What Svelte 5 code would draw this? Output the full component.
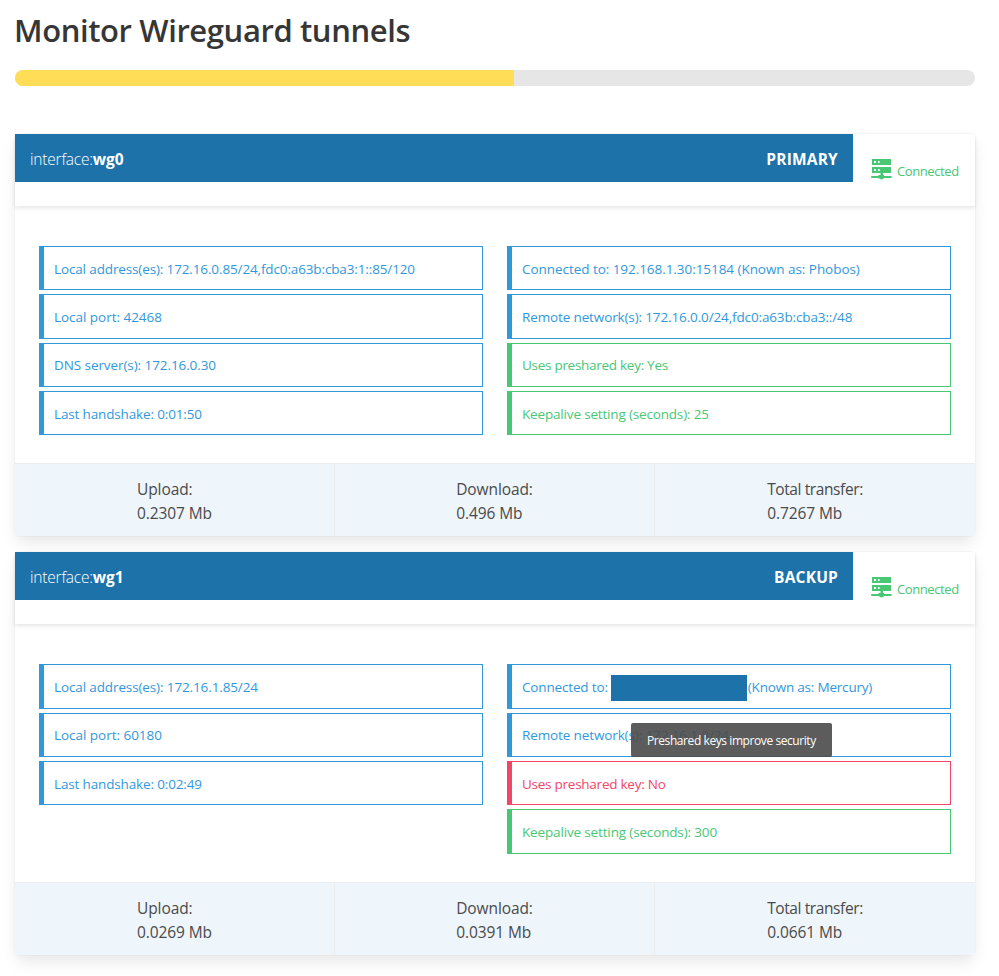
<script>
  const progress = 52;
  const tunnels = [
    {
      name: 'wg0',
      role: 'PRIMARY',
      local: [
        { text: 'Local address(es): 172.16.0.85/24,fdc0:a63b:cba3:1::85/120', track: -0.13 },
        { text: 'Local port: 42468', track: -0.03 },
        { text: 'DNS server(s): 172.16.0.30', track: -0.08 },
        { text: 'Last handshake: 0:01:50', track: -0.15 }
      ],
      remote: [
        { text: 'Connected to: 192.168.1.30:15184 (Known as: Phobos)', kind: 'info', track: -0.05 },
        { text: 'Remote network(s): 172.16.0.0/24,fdc0:a63b:cba3::/48', kind: 'info', track: -0.13 },
        { text: 'Uses preshared key: Yes', kind: 'success', track: -0.28 },
        { text: 'Keepalive setting (seconds): 25', kind: 'success', track: -0.17 }
      ],
      stats: [['Upload:', '0.2307 Mb'], ['Download:', '0.496 Mb'], ['Total transfer:', '0.7267 Mb']]
    },
    {
      name: 'wg1',
      role: 'BACKUP',
      local: [
        { text: 'Local address(es): 172.16.1.85/24', track: -0.12 },
        { text: 'Local port: 60180', track: -0.03 },
        { text: 'Last handshake: 0:02:49', track: -0.15 }
      ],
      remote: [
        { text: 'Connected to:', hidden: true, after: '(Known as: Mercury)', kind: 'info', track: -0.16 },
        { text: 'Remote network(s): 172.16.1.0/24', kind: 'info', track: -0.12 },
        { text: 'Uses preshared key: No', kind: 'danger', track: -0.25, tip: 'Preshared keys improve security' },
        { text: 'Keepalive setting (seconds): 300', kind: 'success', track: -0.15 }
      ],
      stats: [['Upload:', '0.0269 Mb'], ['Download:', '0.0391 Mb'], ['Total transfer:', '0.0661 Mb']]
    }
  ];
</script>

<main>
  <h1>Monitor Wireguard tunnels</h1>
  <div class="progress"><div class="bar" style="width: {progress}%"></div></div>

  {#each tunnels as t}
    <section class="card">
      <header>
        <div class="title">
          <span class="iface">interface:<b>{t.name}</b></span>
          <b class="role">{t.role}</b>
        </div>
        <div class="status">
          <svg width="22" height="22" viewBox="0 0 22 22" fill="currentColor">
            <path fill-rule="evenodd" d="M1 1h19v6H1zM3 3v2h2V3zM7 3v2h1.600V3z" />
            <path fill-rule="evenodd" d="M1 9h19v6H1zM3 11v2h2v-2zM7 11v2h1.600v-2z" />
            <path d="M9.500 15h2.500v2H13v1h7.600v2H13v.5h-1v.7H9v-.7H7.500V20H.2v-2h7.300v-1h2z" />
          </svg>
          <span>Connected</span>
        </div>
      </header>
      <div class="body">
        <div class="column">
          {#each t.local as line}
            <div class="item info"><span style="letter-spacing: {line.track}px">{line.text}</span></div>
          {/each}
        </div>
        <div class="column">
          {#each t.remote as line}
            <div class="item {line.kind}">
              <span style="letter-spacing: {line.track}px">{line.text}</span>
              {#if line.hidden}<i class="redacted"></i><span>{line.after}</span>{/if}
              {#if line.tip}<div class="tooltip"><span>{line.tip}</span></div>{/if}
            </div>
          {/each}
        </div>
      </div>
      <footer>
        {#each t.stats as [label, value]}
          <div class="stat">
            <p><span class:long={label.length > 10}>{label}</span><br />{value}</p>
          </div>
        {/each}
      </footer>
    </section>
  {/each}
</main>

<style>
  :global(body) {
    background: #fff;
  }
  main {
    box-sizing: border-box;
    width: 999px;
    height: 976px;
    overflow: hidden;
    padding: 12px 24px 0 15px;
    font-family: 'Open Sans', 'Noto Sans', sans-serif;
    font-size: 15.5px;
    line-height: 24px;
    color: #4a4a4a;
    white-space: nowrap;
  }
  h1 {
    margin: 0 0 22px -1px;
    font-size: 31px;
    line-height: 36px;
    font-weight: 600;
    letter-spacing: -0.4px;
    color: #363636;
  }
  .progress {
    height: 16px;
    margin-bottom: 48px;
    border-radius: 8px;
    overflow: hidden;
    background: #e6e6e6;
  }
  .bar {
    height: 100%;
    background: #ffdd57;
  }
  .card {
    margin-bottom: 16px;
    border-radius: 4px;
    background: #fff;
    box-shadow: 0 8px 16px -2px rgba(10, 10, 10, 0.1), 0 0 0 1px rgba(10, 10, 10, 0.02);
  }
  header {
    display: flex;
    align-items: flex-start;
    height: 72px;
    box-shadow: 0 2px 4px rgba(10, 10, 10, 0.1);
  }
  .title {
    display: flex;
    flex: 1;
    justify-content: space-between;
    box-sizing: border-box;
    height: 48px;
    padding: 13px 15px 11px;
    color: #fff;
    background: #1d72aa;
  }
  .iface {
    font-weight: 300;
    letter-spacing: -0.2px;
  }
  .title b {
    font-weight: 700;
  }
  .iface b {
    letter-spacing: -0.1px;
  }
  .role {
    letter-spacing: 0.2px;
  }
  .status {
    display: flex;
    width: 122px;
    padding-top: 24px;
    color: #48c774;
    font-size: 13px;
  }
  .status svg {
    margin-left: 18px;
  }
  .status span {
    margin: 1px 0 0 4px;
    letter-spacing: -0.4px;
  }
  .body {
    display: flex;
    gap: 24px;
    padding: 40.05px 24px 28px;
  }
  .column {
    display: flex;
    flex: 1;
    flex-direction: column;
    gap: 4px;
  }
  .item {
    position: relative;
    display: flex;
    align-items: center;
    box-sizing: border-box;
    height: 44.33px;
    padding: 1px 10px 0;
    border: 1px solid;
    border-left-width: 5px;
    font-size: 13.5px;
    letter-spacing: -0.2px;
  }
  .info {
    color: #3298dc;
  }
  .success {
    color: #48c774;
  }
  .danger {
    color: #f14668;
  }
  .redacted {
    width: 136px;
    height: 26px;
    margin: 1px 1px 0 3px;
    background: #1d72aa;
  }
  .tooltip {
    position: absolute;
    left: 119px;
    top: -39px;
    box-sizing: border-box;
    width: 201px;
    height: 34px;
    padding: 6px 16px 0;
    border-radius: 2px;
    color: #fff;
    background: rgba(74, 74, 74, 0.9);
    font-size: 12px;
    letter-spacing: -0.42px;
    line-height: 24px;
  }
  footer {
    display: grid;
    grid-template-columns: repeat(3, 1fr);
    box-sizing: border-box;
    height: 73px;
    border-top: 1px solid #ededed;
    border-radius: 0 0 4px 4px;
    background: #eef5fb;
  }
  .stat {
    display: flex;
    justify-content: center;
    padding-top: 13px;
    border-right: 1px solid #ededed;
  }
  .stat:last-child {
    border-right: 0;
  }
  .stat p {
    margin: 0;
    letter-spacing: -0.1px;
  }
  .long {
    letter-spacing: -0.4px;
  }
</style>
